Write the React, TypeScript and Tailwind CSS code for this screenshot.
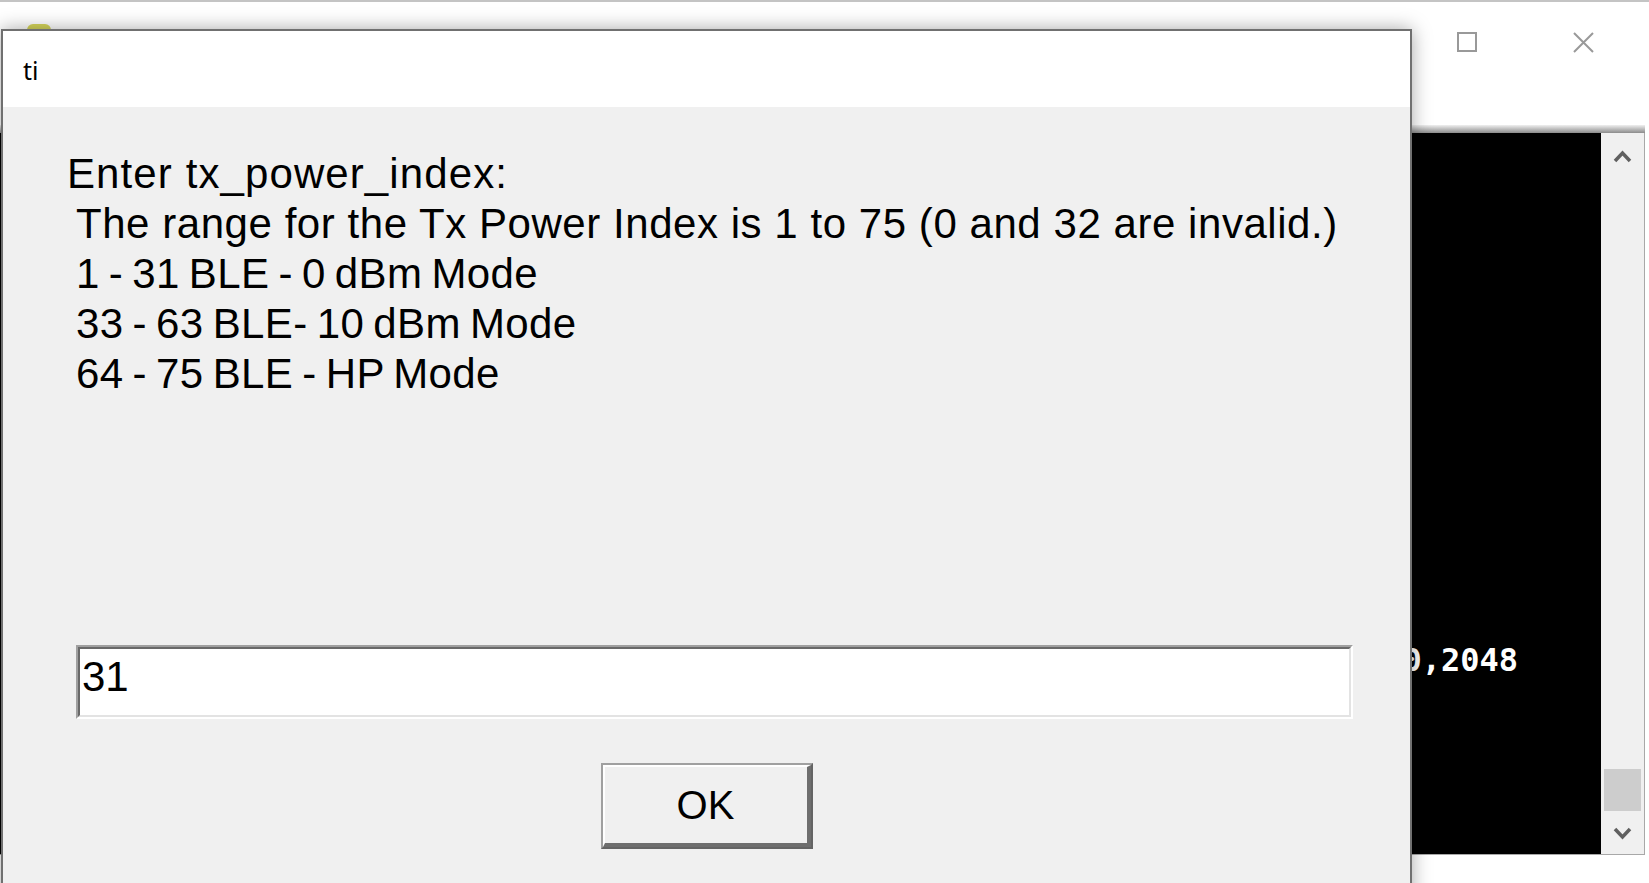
import React from "react";

const modes = [
  "1 - 31 BLE - 0 dBm Mode",
  "33 - 63 BLE- 10 dBm Mode",
  "64 - 75 BLE - HP Mode",
];

function Chevron({ up }: { up?: boolean }) {
  return (
    <svg width="19" height="15" viewBox="0 0 19 15">
      <polyline
        points={up ? "2,12 9.5,4 17,12" : "2,3 9.5,11 17,3"}
        fill="none"
        stroke="#606060"
        strokeWidth="3.5"
      />
    </svg>
  );
}

export default function App() {
  return (
    <div className="relative w-[1649px] h-[883px] overflow-hidden bg-white border-t-2 border-[#c4c4c4]">
      {/* background console window */}
      <div className="flex flex-col w-[1645px] h-full">
        {/* title bar */}
        <div className="flex h-[123px] bg-white">
          <div className="ml-[27px] mt-[22px] w-[24px] h-[24px] rounded-t-md bg-[#d6d65a]" />
          <div className="flex-1" />
          <div className="flex items-start mr-[3px]">
            <div className="w-[117px] h-[80px] flex items-center justify-center">
              <div className="w-[20px] h-[2px] bg-[#999999]" />
            </div>
            <div className="w-[117px] h-[80px] flex items-center justify-center">
              <div className="w-[20px] h-[20px] border-2 border-[#999999]" />
            </div>
            <div className="w-[117px] h-[80px] flex items-center justify-center">
              <svg width="21" height="21" viewBox="0 0 21 21">
                <path d="M1 1 L20 20 M20 1 L1 20" stroke="#999999" strokeWidth="2" />
              </svg>
            </div>
          </div>
        </div>
        <div className="h-[8px] bg-gradient-to-b from-[#f0f0f0] to-[#8c8c8c]" />
        {/* console body */}
        <div className="flex h-[722px] border-r border-b border-[#a8a8a8]">
          <div className="flex-1 bg-black pt-[511px] pr-[83px] text-right">
            <span className="font-['DejaVu_Sans_Mono',monospace] font-bold text-[32px] leading-[32px] text-white">
              0,2048
            </span>
          </div>
          <div className="w-[43px] flex flex-col bg-[#f0f0f0]">
            <div className="h-[43px] flex items-center justify-center pt-[4px]">
              <Chevron up />
            </div>
            <div className="flex-1 flex flex-col justify-end items-center">
              <div className="w-[37px] h-[42px] bg-[#cdcdcd]" />
            </div>
            <div className="h-[43px] flex items-center justify-center pt-[2px]">
              <Chevron />
            </div>
          </div>
        </div>
        <div className="flex-1 bg-white" />
      </div>

      {/* dialog */}
      <div className="absolute left-[1px] top-[27px] w-[1411px] h-[900px] border-2 border-[#707070] flex flex-col shadow-[0_0_18px_rgba(0,0,0,0.35)]">
        <div className="h-[76px] bg-white pl-[20px] pt-[27px]">
          <span className="font-['Noto_Sans',sans-serif] text-[25px] leading-[25px] text-black">ti</span>
        </div>
        <div className="flex-1 bg-[#f0f0f0] pt-[42px] font-['Liberation_Sans',Arial,sans-serif] text-black">
          <div className="pl-[64px] text-[42px] leading-[50px]">
            <div className="tracking-[1.1px]">Enter tx_power_index:</div>
            <div className="pl-[9px] tracking-[0.55px]">
              The range for the Tx Power Index is 1 to 75 (0 and 32 are invalid.)
            </div>
            {modes.map((l) => (
              <div key={l} className="pl-[9px] tracking-[0.4px] [word-spacing:-3px]">
                {l}
              </div>
            ))}
          </div>

          <div className="mt-[246px] ml-[73px] w-[1277px] h-[74px] border-2 border-t-[#a0a0a0] border-l-[#a0a0a0] border-b-white border-r-white">
            <div className="h-full border-2 border-t-[#696969] border-l-[#696969] border-b-[#e3e3e3] border-r-[#e3e3e3] bg-white pl-[2px] pt-[3px] text-[42px] leading-[50px]">
              31
            </div>
          </div>

          <div className="mt-[44px] flex justify-center">
            <div className="w-[212px] h-[86px] border-2 border-t-[#a0a0a0] border-l-[#a0a0a0] border-b-[#646464] border-r-[#646464]">
              <div className="h-full flex items-center justify-center border-t-2 border-l-2 border-b-[4px] border-r-[4px] border-t-white border-l-white border-b-[#6e6e6e] border-r-[#6e6e6e] bg-[#f0f0f0] text-[40px] leading-[50px]">
                OK
              </div>
            </div>
          </div>
        </div>
      </div>
    </div>
  );
}
